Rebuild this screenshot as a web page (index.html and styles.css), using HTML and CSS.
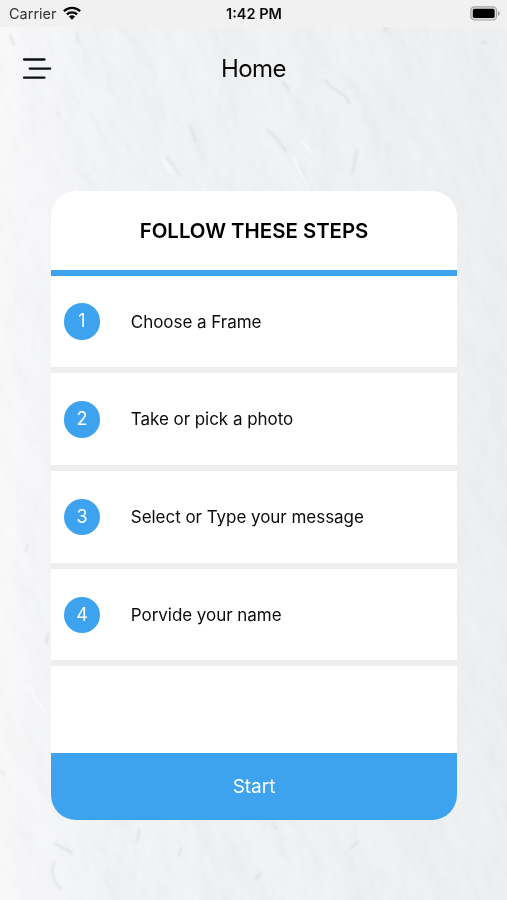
FILE: index.html
```html
<!DOCTYPE html>
<html lang="en">
<head>
    <meta charset="UTF-8">
    <meta name="viewport" content="width=device-width, initial-scale=1.0">
    <title>Home</title>
    <link rel="stylesheet" href="styles.css">
</head>
<body>
    <!-- Plaster wall behind the page -->
    <svg class="wall" width="507" height="900" viewBox="0 0 507 900" aria-hidden="true">
        <defs>
            <filter id="plaster" x="0" y="0" width="100%" height="100%" color-interpolation-filters="sRGB">
                <feTurbulence type="fractalNoise" baseFrequency="0.02 0.012" numOctaves="4" seed="8" result="noise"/>
                <feDiffuseLighting in="noise" surfaceScale="2.4" diffuseConstant="1.08" lighting-color="#f3f4f6">
                    <feDistantLight azimuth="200" elevation="65"/>
                </feDiffuseLighting>
                <feGaussianBlur stdDeviation="0.8"/>
            </filter>
            <filter id="soft">
                <feGaussianBlur stdDeviation="0.9"/>
            </filter>
            <linearGradient id="light" x1="0" y1="0" x2="1" y2="0">
                <stop offset="0" stop-color="#fff" stop-opacity="0.5"/>
                <stop offset="0.25" stop-color="#f3f4f6" stop-opacity="0.2"/>
                <stop offset="1" stop-color="#e8eaec" stop-opacity="0.4"/>
            </linearGradient>
        </defs>
        <rect width="507" height="900" fill="#f1f2f4"/>
        <rect x="-300" y="-200" width="1150" height="1400" transform="rotate(-25 253 450)" filter="url(#plaster)" opacity="0.32"/>
        <rect width="507" height="900" fill="url(#light)"/>
        <g fill="none" stroke="#cccfd3" stroke-width="1.5" stroke-linecap="round" filter="url(#soft)">
            <path d="M10 35l4 10M77 33l1 10M268 130l9 9 9 12M283 82l6 8M325 80l6 7 15 10 3 6M167 157l8 10 5 9M299 166l8 17 5 7M190 126l6 16M385 26l1 5M482 42l4 1M357 150l-5 24M57 113l2 2" opacity="0.6"/>
            <path d="M28 545l-3 7M48 633l-2 10M0 771l4 3M54 862l-2 9 3 11 6 7M139 829l-1 9-2 4M54 843l18 10M181 848l-2 8M272 823l5 6M350 849l8-8M260 873l-4 6" opacity="0.65"/>
        </g>
        <g fill="none" stroke="#fafbfc" stroke-width="2" stroke-linecap="round" filter="url(#soft)">
            <path d="M294 158l9 19 7 12M163 160l8 13M29 685l7 14 10 14M303 142l9 12"/>
        </g>
    </svg>

    <div class="status-bar">
        <div class="carrier">
            <span>Carrier</span>
            <svg width="18" height="14" viewBox="0 0 18 14">
                <g fill="none" stroke="#000" stroke-width="2.3">
                    <path d="M.9 5.2a11.6 11.6 0 0 1 16.2 0"/>
                    <path d="M3.9 8.4a7.4 7.4 0 0 1 10.2 0"/>
                </g>
                <path d="M9 13.7L5.9 10.6a4.5 4.5 0 0 1 6.2 0z"/>
            </svg>
        </div>
        <div class="time">1:42 PM</div>
        <div class="battery">
            <svg width="31" height="15" viewBox="0 0 31 15">
                <rect x=".8" y=".8" width="25.8" height="13.2" rx="3.8" fill="#dcdcdc" stroke="#a6a6a6" stroke-width="1.2"/>
                <rect x="2.8" y="2.7" width="21.8" height="9.4" rx="1.8"/>
                <path d="M28 5.2c2.4.8 2.4 3.8 0 4.6z" fill="#a0a0a0"/>
            </svg>
        </div>
    </div>

    <div class="header">
        <button class="menu" aria-label="Menu">
            <svg width="30" height="24" viewBox="0 0 30 24">
                <path d="M2 2.500h20.500M7.700 11.600h20.500M2 20.700h20.500" fill="none" stroke="#0d0f12" stroke-width="2.300" stroke-linecap="round"/>
            </svg>
        </button>
        <h1>Home</h1>
    </div>

    <div class="card">
        <h2>FOLLOW THESE STEPS</h2>
        <ol class="steps">
            <li><span class="number">1</span><span>Choose a Frame</span></li>
            <li><span class="number">2</span><span>Take or pick a photo</span></li>
            <li><span class="number">3</span><span>Select or Type your message</span></li>
            <li><span class="number">4</span><span>Porvide your name</span></li>
        </ol>
        <button class="start">Start</button>
    </div>
</body>
</html>
```
FILE: styles.css
```css
* {
    box-sizing: border-box;
}
body {
    font-family: Inter, "Liberation Sans", sans-serif;
    background-color: #f1f2f4;
    color: #0b0b0b;
    margin: 0;
    height: 900px;
    overflow: hidden;
}
button {
    font-family: inherit;
    border: none;
    padding: 0;
    cursor: pointer;
}
.wall {
    position: absolute;
    top: 0;
    left: 0;
    z-index: -1;
}
.status-bar {
    display: grid;
    grid-template-columns: 1fr auto 1fr;
    align-items: center;
    height: 27px;
    padding: 0 6px 0 9px;
    background-color: #f1f1f1;
    font-size: 14.5px;
}
.carrier {
    display: flex;
    align-items: center;
    gap: 6px;
    color: #333;
}
.carrier svg {
    margin-bottom: 2px;
}
.time {
    font-weight: 600;
    padding-right: 2px;
}
.battery {
    display: flex;
    justify-content: flex-end;
    padding-bottom: 1px;
}
.header {
    display: grid;
    grid-template-columns: 1fr auto 1fr;
    align-items: center;
    height: 83px;
    padding: 0 21.5px;
}
.header h1 {
    margin: 0;
    font-size: 24px;
    font-weight: 400;
    letter-spacing: -0.6px;
}
.menu {
    display: flex;
    background: none;
}
.card {
    display: flex;
    flex-direction: column;
    width: 405.5px;
    height: 629px;
    margin: 81px 0 0 51.3px;
    background-color: #fff;
    border-radius: 25px;
    overflow: hidden;
}
.card h2 {
    height: 84.5px;
    margin: 0;
    border-bottom: 6px solid #3da3ef;
    font-size: 20.4px;
    font-weight: 600;
    line-height: 79px;
    text-align: center;
    color: #000;
}
.steps {
    flex: 1;
    margin: 0;
    padding: 0;
    list-style: none;
}
.steps li {
    display: flex;
    align-items: center;
    gap: 30.5px;
    height: 97.7px;
    padding: 0.8px 0 0 12.4px;
    border-bottom: 6px solid #eee;
    font-size: 17px;
    letter-spacing: -0.04px;
}
.number {
    width: 36.6px;
    height: 36.6px;
    border-radius: 50%;
    background-color: #3da3ef;
    color: #fff;
    font-size: 18px;
    line-height: 36.6px;
    text-align: center;
}
.start {
    height: 67px;
    background-color: #3da3ef;
    color: #fff;
    font-size: 19px;
}
```
